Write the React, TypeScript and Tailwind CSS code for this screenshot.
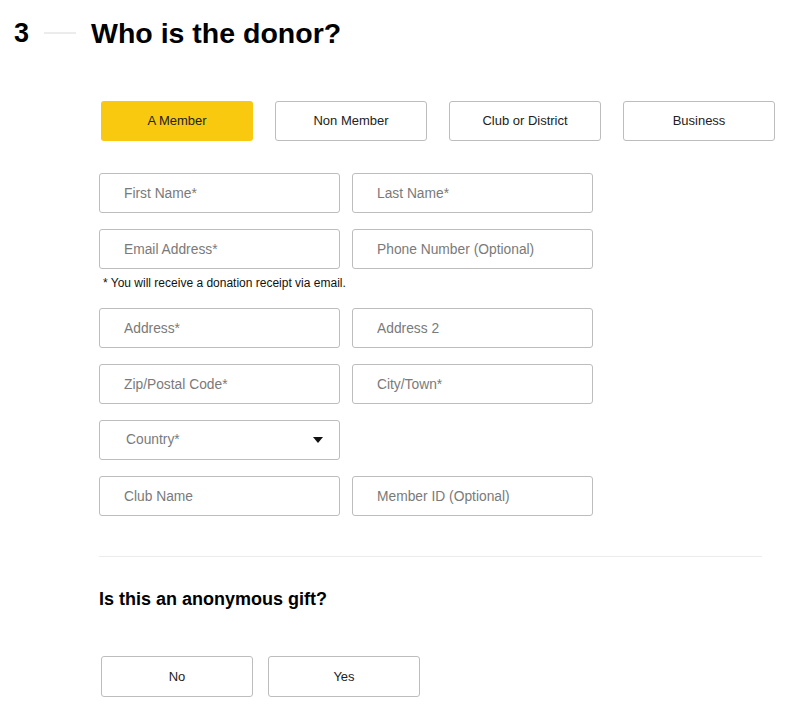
import React, { useState } from 'react';

const donorTypes = ['A Member', 'Non Member', 'Club or District', 'Business'];

const Field: React.FC<{ placeholder: string }> = ({ placeholder }) => (
  <input
    placeholder={placeholder}
    className="w-[241px] h-[40px] rounded-[3px] border border-[#bdbdbd] bg-white pl-[24px] text-[13.8px] text-[#333] placeholder:text-[#7a7a7a] outline-none"
  />
);

const App: React.FC = () => {
  const [donorType, setDonorType] = useState('A Member');
  const [anonymous, setAnonymous] = useState<string | null>(null);

  return (
    <div className="w-[795px] h-[711px] bg-white overflow-hidden font-['Liberation_Sans',Arial,sans-serif] text-black">
      {/* Step heading */}
      <div className="flex items-center pt-[15px] pl-[14px]">
        <span className="text-[27px] font-bold leading-[36px]">3</span>
        <span className="ml-[15px] w-[32px] h-[2px] bg-[#ececec]" />
        <h1 className="ml-[15px] text-[28.5px] font-bold leading-[36px]">Who is the donor?</h1>
      </div>

      <div className="pl-[99px]">
        {/* Donor type */}
        <div className="flex gap-[22px] ml-[2px] mt-[50px]">
          {donorTypes.map((t) => (
            <button
              key={t}
              onClick={() => setDonorType(t)}
              className={`w-[152px] h-[40px] rounded-[3px] text-[13px] ${
                donorType === t ? 'bg-[#f8c90f] text-[#222]' : 'bg-white border border-[#bdbdbd] text-[#222]'
              }`}
            >
              {t}
            </button>
          ))}
        </div>

        {/* Form fields */}
        <div className="mt-[32px] flex flex-col">
          <div className="flex gap-[12px]">
            <Field placeholder="First Name*" />
            <Field placeholder="Last Name*" />
          </div>
          <div className="flex gap-[12px] mt-[16px]">
            <Field placeholder="Email Address*" />
            <Field placeholder="Phone Number (Optional)" />
          </div>
          <p className="ml-[4px] mt-[6px] text-[12px] leading-[16px] text-[#111]">
            * You will receive a donation receipt via email.
          </p>
          <div className="flex gap-[12px] mt-[17px]">
            <Field placeholder="Address*" />
            <Field placeholder="Address 2" />
          </div>
          <div className="flex gap-[12px] mt-[16px]">
            <Field placeholder="Zip/Postal Code*" />
            <Field placeholder="City/Town*" />
          </div>
          <div className="mt-[16px] w-[241px] h-[40px] rounded-[3px] border border-[#bdbdbd] flex items-center justify-between pl-[26px] pr-[16px]">
            <span className="text-[13.8px] text-[#7a7a7a]">Country*</span>
            <svg width="10" height="6" viewBox="0 0 10 6">
              <path d="M0 0h10L5 6z" fill="#111" />
            </svg>
          </div>
          <div className="flex gap-[12px] mt-[16px]">
            <Field placeholder="Club Name" />
            <Field placeholder="Member ID (Optional)" />
          </div>
        </div>

        <div className="mt-[40px] w-[663px] h-px bg-[#ececec]" />

        <h2 className="mt-[30px] text-[18px] font-bold leading-[24px]">Is this an anonymous gift?</h2>

        <div className="flex gap-[15px] ml-[2px] mt-[45px]">
          {['No', 'Yes'].map((t) => (
            <button
              key={t}
              onClick={() => setAnonymous(t)}
              className={`w-[152px] h-[41px] rounded-[3px] text-[13px] text-[#222] ${
                anonymous === t ? 'bg-[#f8c90f]' : 'bg-white border border-[#bdbdbd]'
              }`}
            >
              {t}
            </button>
          ))}
        </div>
      </div>
    </div>
  );
};

export default App;
